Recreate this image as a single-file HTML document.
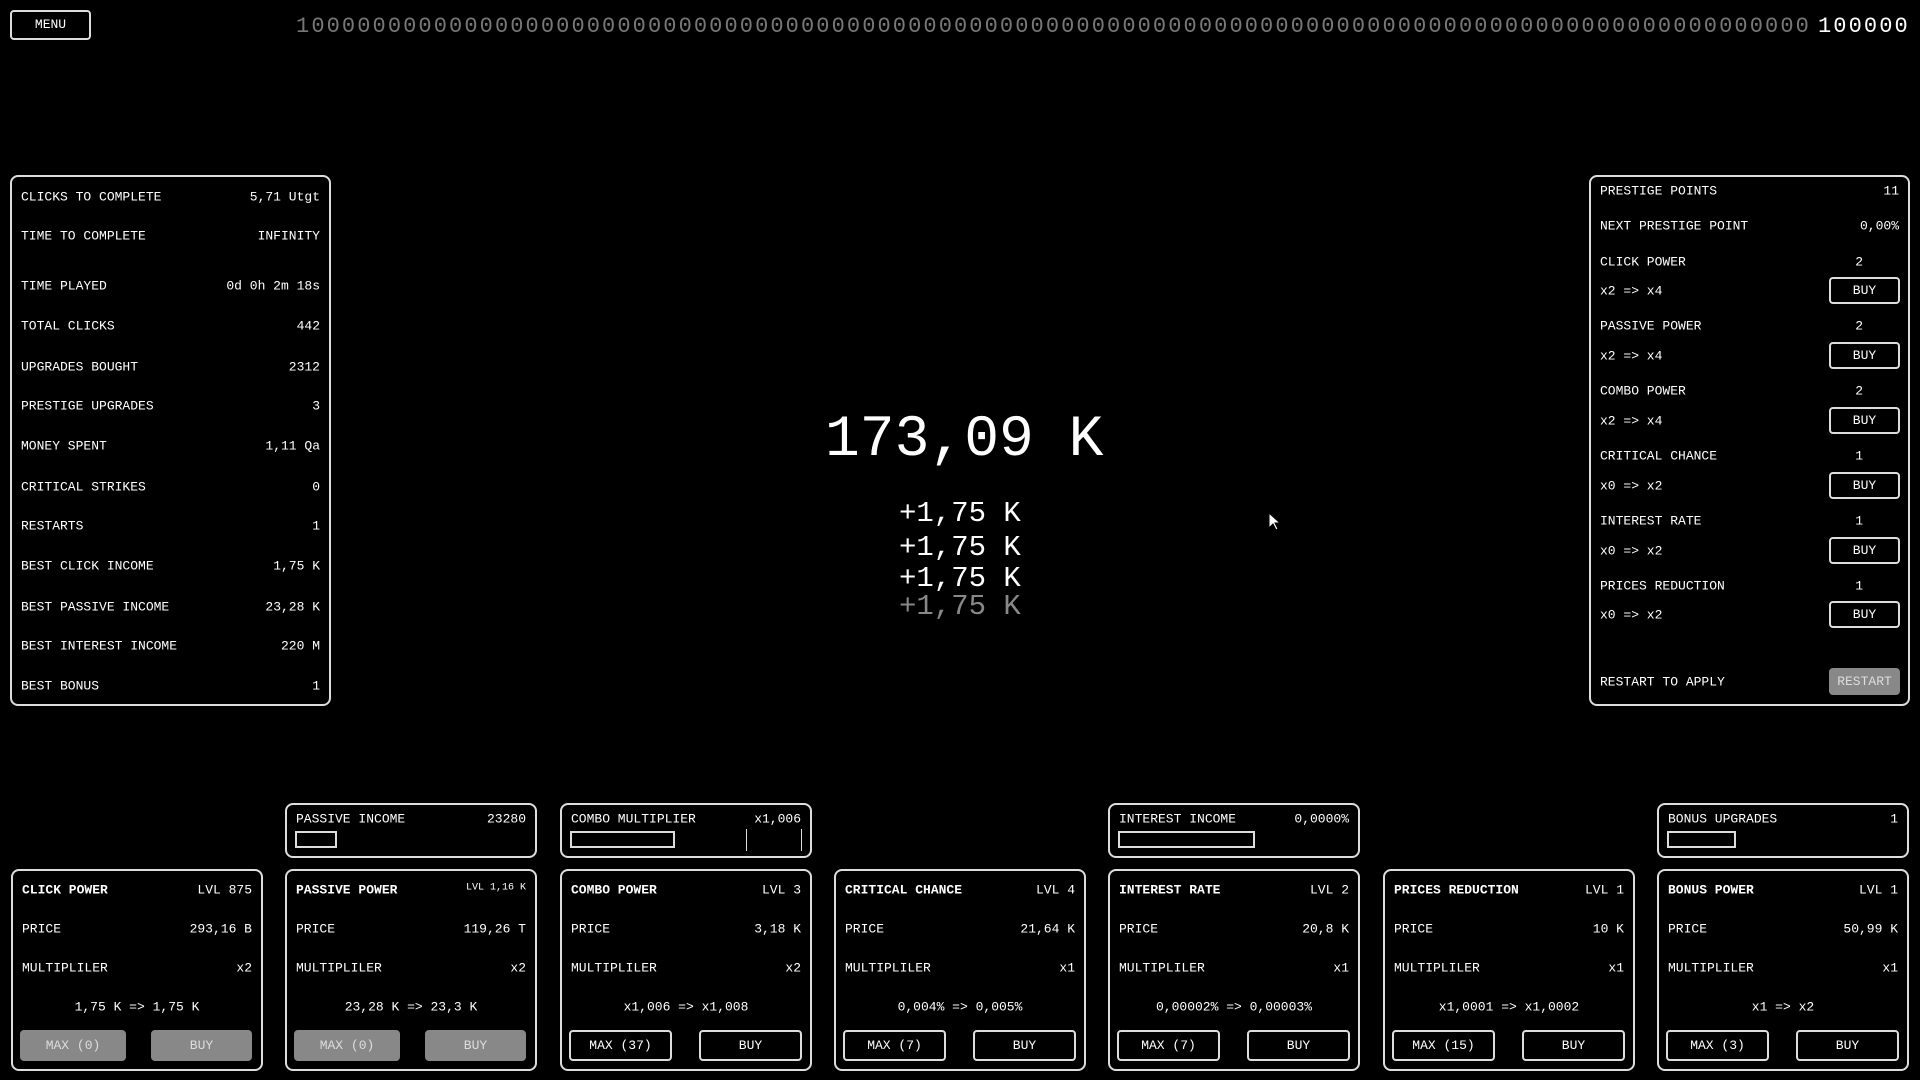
<!DOCTYPE html>
<html><head><meta charset="utf-8"><style>
*{margin:0;padding:0;box-sizing:border-box}
body{width:1920px;height:1080px;background:#000;color:#fff;font-family:"Liberation Mono",monospace;font-size:13px;position:relative;overflow:hidden}
.a{position:absolute;white-space:nowrap}
.box{position:absolute;border:2px solid #ddd;border-radius:8px}
.btn{position:absolute;border:2px solid #ddd;border-radius:4px;text-align:center;font-size:13px}
.g{background:#888;border-color:#888}
.r{text-align:right}
.row{position:absolute;left:9px;right:9px;display:flex;justify-content:space-between;transform:translateY(-50%)}
</style></head><body>
<div class="btn" style="left:10px;top:10px;width:81px;height:30px;line-height:26px">MENU</div>
<div class="a" style="left:296px;top:13px;font-size:22px;letter-spacing:2.1px;color:#777;line-height:28px">1<span>00000000000000000000000000000000000000000000000000000000000000000000000000000000000000000000000000</span></div>
<div class="a" style="left:1818px;top:13px;font-size:22px;letter-spacing:2.1px;color:#fff;line-height:28px;background:#000">100000</div>

<div class="box" style="left:10px;top:175px;width:321px;height:531px">
<div class="row" style="top:20px"><span>CLICKS TO COMPLETE</span><span>5,71 Utgt</span></div>
<div class="row" style="top:59px"><span>TIME TO COMPLETE</span><span>INFINITY</span></div>
<div class="row" style="top:109px"><span>TIME PLAYED</span><span>0d 0h 2m 18s</span></div>
<div class="row" style="top:149px"><span>TOTAL CLICKS</span><span>442</span></div>
<div class="row" style="top:190px"><span>UPGRADES BOUGHT</span><span>2312</span></div>
<div class="row" style="top:229px"><span>PRESTIGE UPGRADES</span><span>3</span></div>
<div class="row" style="top:269px"><span>MONEY SPENT</span><span>1,11 Qa</span></div>
<div class="row" style="top:310px"><span>CRITICAL STRIKES</span><span>0</span></div>
<div class="row" style="top:349px"><span>RESTARTS</span><span>1</span></div>
<div class="row" style="top:389px"><span>BEST CLICK INCOME</span><span>1,75 K</span></div>
<div class="row" style="top:430px"><span>BEST PASSIVE INCOME</span><span>23,28 K</span></div>
<div class="row" style="top:469px"><span>BEST INTEREST INCOME</span><span>220 M</span></div>
<div class="row" style="top:509px"><span>BEST BONUS</span><span>1</span></div>
</div>

<div class="a" style="left:825px;top:407px;font-size:58px;line-height:68px">173,09 K</div>
<div class="a" style="left:899px;top:497px;font-size:29px;line-height:34px">+1,75 K</div>
<div class="a" style="left:899px;top:531px;font-size:29px;line-height:34px">+1,75 K</div>
<div class="a" style="left:899px;top:562px;font-size:29px;line-height:34px">+1,75 K</div>
<div class="a" style="left:899px;top:590px;font-size:29px;line-height:34px;color:#888">+1,75 K</div>
<svg class="a" style="left:1268px;top:512px" width="14" height="20" viewBox="0 0 14 20"><path d="M1 1 L1 16 L5 12 L8 18 L10 17 L7 11 L12 11 Z" fill="#fff" stroke="#000" stroke-width="1"/></svg>

<div class="box" style="left:1589px;top:175px;width:321px;height:531px">
<div class="row" style="top:14px"><span>PRESTIGE POINTS</span><span>11</span></div>
<div class="row" style="top:49px"><span>NEXT PRESTIGE POINT</span><span>0,00%</span></div>
<div class="row" style="top:85px"><span>CLICK POWER</span><span style="margin-right:36px">2</span></div>
<div class="row" style="top:114px"><span>x2 =&gt; x4</span></div>
<div class="row" style="top:149px"><span>PASSIVE POWER</span><span style="margin-right:36px">2</span></div>
<div class="row" style="top:179px"><span>x2 =&gt; x4</span></div>
<div class="row" style="top:214px"><span>COMBO POWER</span><span style="margin-right:36px">2</span></div>
<div class="row" style="top:244px"><span>x2 =&gt; x4</span></div>
<div class="row" style="top:279px"><span>CRITICAL CHANCE</span><span style="margin-right:36px">1</span></div>
<div class="row" style="top:309px"><span>x0 =&gt; x2</span></div>
<div class="row" style="top:344px"><span>INTEREST RATE</span><span style="margin-right:36px">1</span></div>
<div class="row" style="top:374px"><span>x0 =&gt; x2</span></div>
<div class="row" style="top:409px"><span>PRICES REDUCTION</span><span style="margin-right:36px">1</span></div>
<div class="row" style="top:438px"><span>x0 =&gt; x2</span></div>
<div class="row" style="top:505px"><span>RESTART TO APPLY</span></div>
<div class="btn" style="left:238px;top:100px;width:71px;height:27px;line-height:23px">BUY</div>
<div class="btn" style="left:238px;top:165px;width:71px;height:27px;line-height:23px">BUY</div>
<div class="btn" style="left:238px;top:230px;width:71px;height:27px;line-height:23px">BUY</div>
<div class="btn" style="left:238px;top:295px;width:71px;height:27px;line-height:23px">BUY</div>
<div class="btn" style="left:238px;top:360px;width:71px;height:27px;line-height:23px">BUY</div>
<div class="btn" style="left:238px;top:424px;width:71px;height:27px;line-height:23px">BUY</div>
<div class="btn g" style="left:238px;top:491px;width:71px;height:27px;line-height:23px;color:#ddd">RESTART</div>
</div>

<div class="box" style="left:285px;top:803px;width:252px;height:55px"><div class="row" style="top:14px"><span>PASSIVE INCOME</span><span>23280</span></div><div class="a" style="left:8px;top:26px;width:42px;height:17px;border:2px solid #ddd"></div></div>
<div class="box" style="left:560px;top:803px;width:252px;height:55px"><div class="row" style="top:14px"><span>COMBO MULTIPLIER</span><span>x1,006</span></div><div class="a" style="left:8px;top:26px;width:105px;height:17px;border:2px solid #ddd"></div><div class="a" style="left:184px;top:24px;width:1px;height:22px;background:#ddd"></div><div class="a" style="left:239px;top:24px;width:1px;height:22px;background:#ddd"></div></div>
<div class="box" style="left:1108px;top:803px;width:252px;height:55px"><div class="row" style="top:14px"><span>INTEREST INCOME</span><span>0,0000%</span></div><div class="a" style="left:8px;top:26px;width:137px;height:17px;border:2px solid #ddd"></div></div>
<div class="box" style="left:1657px;top:803px;width:252px;height:55px"><div class="row" style="top:14px"><span>BONUS UPGRADES</span><span>1</span></div><div class="a" style="left:8px;top:26px;width:69px;height:17px;border:2px solid #ddd"></div></div>

<div class="box" style="left:11px;top:869px;width:252px;height:202px">
<div class="row" style="top:19px"><b>CLICK POWER</b><span>LVL 875</span></div>
<div class="row" style="top:58px"><span>PRICE</span><span>293,16 B</span></div>
<div class="row" style="top:97px"><span>MULTIPLILER</span><span>x2</span></div>
<div class="row" style="top:136px;justify-content:center"><span>1,75 K =&gt; 1,75 K</span></div>
<div class="btn g" style="left:7px;top:159px;width:106px;height:31px;line-height:27px;color:#ddd">MAX (0)</div>
<div class="btn g" style="left:138px;top:159px;width:101px;height:31px;line-height:27px;color:#ddd">BUY</div></div>
<div class="box" style="left:285px;top:869px;width:252px;height:202px">
<div class="row" style="top:19px"><b>PASSIVE POWER</b><span style="font-size:10px">LVL 1,16 K</span></div>
<div class="row" style="top:58px"><span>PRICE</span><span>119,26 T</span></div>
<div class="row" style="top:97px"><span>MULTIPLILER</span><span>x2</span></div>
<div class="row" style="top:136px;justify-content:center"><span>23,28 K =&gt; 23,3 K</span></div>
<div class="btn g" style="left:7px;top:159px;width:106px;height:31px;line-height:27px;color:#ddd">MAX (0)</div>
<div class="btn g" style="left:138px;top:159px;width:101px;height:31px;line-height:27px;color:#ddd">BUY</div></div>
<div class="box" style="left:560px;top:869px;width:252px;height:202px">
<div class="row" style="top:19px"><b>COMBO POWER</b><span>LVL 3</span></div>
<div class="row" style="top:58px"><span>PRICE</span><span>3,18 K</span></div>
<div class="row" style="top:97px"><span>MULTIPLILER</span><span>x2</span></div>
<div class="row" style="top:136px;justify-content:center"><span>x1,006 =&gt; x1,008</span></div>
<div class="btn" style="left:7px;top:159px;width:103px;height:31px;line-height:27px">MAX (37)</div>
<div class="btn" style="left:137px;top:159px;width:103px;height:31px;line-height:27px">BUY</div></div>
<div class="box" style="left:834px;top:869px;width:252px;height:202px">
<div class="row" style="top:19px"><b>CRITICAL CHANCE</b><span>LVL 4</span></div>
<div class="row" style="top:58px"><span>PRICE</span><span>21,64 K</span></div>
<div class="row" style="top:97px"><span>MULTIPLILER</span><span>x1</span></div>
<div class="row" style="top:136px;justify-content:center"><span>0,004% =&gt; 0,005%</span></div>
<div class="btn" style="left:7px;top:159px;width:103px;height:31px;line-height:27px">MAX (7)</div>
<div class="btn" style="left:137px;top:159px;width:103px;height:31px;line-height:27px">BUY</div></div>
<div class="box" style="left:1108px;top:869px;width:252px;height:202px">
<div class="row" style="top:19px"><b>INTEREST RATE</b><span>LVL 2</span></div>
<div class="row" style="top:58px"><span>PRICE</span><span>20,8 K</span></div>
<div class="row" style="top:97px"><span>MULTIPLILER</span><span>x1</span></div>
<div class="row" style="top:136px;justify-content:center"><span>0,00002% =&gt; 0,00003%</span></div>
<div class="btn" style="left:7px;top:159px;width:103px;height:31px;line-height:27px">MAX (7)</div>
<div class="btn" style="left:137px;top:159px;width:103px;height:31px;line-height:27px">BUY</div></div>
<div class="box" style="left:1383px;top:869px;width:252px;height:202px">
<div class="row" style="top:19px"><b>PRICES REDUCTION</b><span>LVL 1</span></div>
<div class="row" style="top:58px"><span>PRICE</span><span>10 K</span></div>
<div class="row" style="top:97px"><span>MULTIPLILER</span><span>x1</span></div>
<div class="row" style="top:136px;justify-content:center"><span>x1,0001 =&gt; x1,0002</span></div>
<div class="btn" style="left:7px;top:159px;width:103px;height:31px;line-height:27px">MAX (15)</div>
<div class="btn" style="left:137px;top:159px;width:103px;height:31px;line-height:27px">BUY</div></div>
<div class="box" style="left:1657px;top:869px;width:252px;height:202px">
<div class="row" style="top:19px"><b>BONUS POWER</b><span>LVL 1</span></div>
<div class="row" style="top:58px"><span>PRICE</span><span>50,99 K</span></div>
<div class="row" style="top:97px"><span>MULTIPLILER</span><span>x1</span></div>
<div class="row" style="top:136px;justify-content:center"><span>x1 =&gt; x2</span></div>
<div class="btn" style="left:7px;top:159px;width:103px;height:31px;line-height:27px">MAX (3)</div>
<div class="btn" style="left:137px;top:159px;width:103px;height:31px;line-height:27px">BUY</div></div>
</body></html>
